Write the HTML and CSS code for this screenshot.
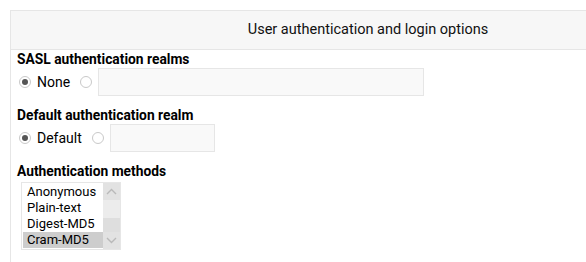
FILE: index.html
```html
<!DOCTYPE html>
<html lang="en">
<head>
  <meta charset="UTF-8" />
  <title>User authentication and login options</title>
  <link rel="stylesheet" href="styles.css">
</head>
<body>
  <div class="panel">
    <div class="panel-head">User authentication and login options</div>
    <div class="panel-body">
      <div class="field">
        <div class="field-label">SASL authentication realms</div>
        <div class="radio-row">
          <label class="opt"><input type="radio" name="sasl" checked> None</label>
          <input type="radio" name="sasl">
          <input type="text" class="text-in wide">
        </div>
      </div>

      <div class="field">
        <div class="field-label">Default authentication realm</div>
        <div class="radio-row">
          <label class="opt"><input type="radio" name="realm" checked> Default</label>
          <input type="radio" name="realm">
          <input type="text" class="text-in narrow">
        </div>
      </div>

      <div class="field">
        <div class="field-label">Authentication methods</div>
        <div class="listbox">
          <div class="list-items">
            <div class="list-item">Anonymous</div>
            <div class="list-item">Plain-text</div>
            <div class="list-item">Digest-MD5</div>
            <div class="list-item selected">Cram-MD5</div>
          </div>
          <div class="scroll">
            <div class="scroll-btn">
              <svg width="11" height="7" viewBox="0 0 11 7"><path d="M1 6 L5.5 1.5 L10 6" fill="none" stroke="#b9b9b9" stroke-width="1.4"/></svg>
            </div>
            <div class="scroll-thumb"></div>
            <div class="scroll-track"></div>
            <div class="scroll-btn">
              <svg width="11" height="7" viewBox="0 0 11 7"><path d="M1 1 L5.5 5.5 L10 1" fill="none" stroke="#b9b9b9" stroke-width="1.4"/></svg>
            </div>
          </div>
        </div>
      </div>
    </div>
  </div>
</body>
</html>
```

FILE: styles.css
```css
body {
  margin: 10px 0 0 10px;
  font-family: Roboto, "Liberation Sans", sans-serif;
  color: #000;
  background: #fff;
}
.panel {
  min-height: 251px;
  border-top: 1px solid #e6e6e6;
  border-left: 1px solid #e6e6e6;
}
.panel-head {
  background: #f7f7f7;
  border-bottom: 1px solid #e6e6e6;
  height: 38px;
  line-height: 38px;
  padding-left: 139px;
  text-align: center;
  font-size: 14.5px;
  color: #111;
}
.panel-body {
  padding: 1px 0 0 6px;
}
.field {
  margin-bottom: 10px;
}
.field-label {
  font-weight: bold;
  font-size: 13.8px;
  line-height: 16px;
}
.radio-row {
  display: flex;
  align-items: center;
  height: 30px;
  font-size: 14px;
}
.opt {
  display: flex;
  align-items: center;
  gap: 6px;
  margin-right: 8px;
}
input[type=radio] {
  appearance: none;
  width: 12px;
  height: 12px;
  margin: 0 0 0 2px;
  border: 1px solid #c9c9c9;
  border-radius: 50%;
  background: #fff;
  display: grid;
  place-content: center;
}
input[type=radio]:checked::before {
  content: "";
  width: 6px;
  height: 6px;
  border-radius: 50%;
  background: #555;
}
.text-in {
  height: 28px;
  box-sizing: border-box;
  border: 1px solid #e6e6e6;
  background: #f9f9f9;
  margin-left: 6px;
}
.wide {
  width: 326px;
}
.narrow {
  width: 105px;
}
.listbox {
  display: flex;
  width: 100px;
  height: 68px;
  margin: 3px 0 0 4px;
  border: 1px solid #e6e6e6;
  box-sizing: border-box;
  background: #fff;
}
.list-items {
  flex: 1;
  padding: 1px 0 0 1px;
}
.list-item {
  font-size: 13px;
  height: 16px;
  line-height: 16px;
  padding-left: 4px;
}
.list-item.selected {
  background: #cdcdcd;
}
.scroll {
  width: 17px;
  display: flex;
  flex-direction: column;
  background: #f0f0f0;
}
.scroll-btn {
  height: 17px;
  background: #e2e2e2;
  display: flex;
  align-items: center;
  justify-content: center;
}
.scroll-thumb {
  height: 18px;
  background: #ececec;
}
.scroll-track {
  flex: 1;
  background: #dedede;
}
```
